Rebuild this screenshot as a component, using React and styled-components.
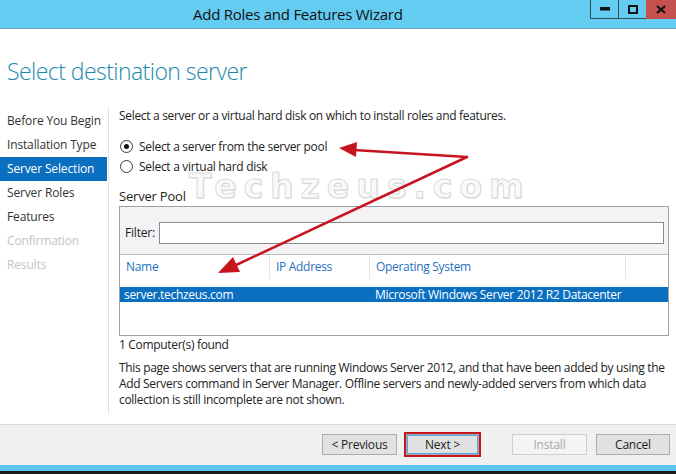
import styled, { createGlobalStyle } from "styled-components";

const GlobalStyle = createGlobalStyle`
    html, body {
        margin: 0;
        padding: 0;
        background: #ffffff;
    }
    body {
        font-family: "Open Sans", "Noto Sans", sans-serif;
        font-size: 12px;
        color: #1e1e1e;
    }
`;

const Window = styled.div`
    position: relative;
    width: 676px;
    height: 474px;
    display: flex;
    flex-direction: column;
    background: #ffffff;
    overflow: hidden;
`;

const TitleBar = styled.div`
    height: 28px;
    display: flex;
    background: #64cbf1;
    border-bottom: 1px solid #6fa9c4;
`;

const Title = styled.div`
    flex: 1;
    padding-left: 193px;
    font-size: 15px;
    line-height: 28px;
    color: #111;
    letter-spacing: -0.25px;
`;

const Controls = styled.div`
    display: flex;
    align-self: flex-start;
    height: 19px;
`;

const ControlButton = styled.div`
    width: ${p => p.w}px;
    height: ${p => (p.close ? 19 : 18)}px;
    display: flex;
    align-items: center;
    justify-content: center;
    background: ${p => (p.close ? "#c75050" : "transparent")};
    border-left: ${p => (p.close ? "none" : "1px solid #2f4f5c")};
    border-bottom: ${p => (p.close ? "none" : "1px solid #2f4f5c")};
`;

const Header = styled.div`
    padding: 27px 0 22px 7px;
`;

const Heading = styled.h1`
    margin: 0;
    font-family: "Open Sans", sans-serif;
    font-weight: 300;
    font-size: 23px;
    line-height: 30px;
    color: #1a8aac;
    letter-spacing: -0.55px;
`;

const Body = styled.div`
    flex: 1;
    display: flex;
    padding-bottom: 10px;
    min-height: 0;
`;

const Nav = styled.div`
    width: 108px;
    padding-top: 1px;
    border-right: 1px solid #e2e2e2;
    display: flex;
    flex-direction: column;
`;

const NavItem = styled.div`
    height: 24px;
    line-height: 24px;
    padding-left: 7px;
    margin-right: 1px;
    white-space: nowrap;
    letter-spacing: -0.15px;
    color: ${p => (p.active ? "#ffffff" : p.disabled ? "#c4c4c4" : "#333333")};
    background: ${p => (p.active ? "#0b6fc0" : "transparent")};
`;

const Content = styled.div`
    flex: 1;
    padding: 0 7px 0 10px;
    display: flex;
    flex-direction: column;
`;

const Text = styled.div`
    line-height: 16px;
    letter-spacing: -0.32px;
    margin-top: ${p => p.mt || 0}px;
    color: #222;
`;

const RadioGroup = styled.div`
    margin-top: 12px;
    display: flex;
    flex-direction: column;
`;

const RadioRow = styled.label`
    height: 20px;
    display: flex;
    align-items: center;
    gap: 6px;
    padding-left: 1px;
    letter-spacing: -0.3px;
    color: #222;
`;

const RadioCircle = styled.span`
    width: 11px;
    height: 11px;
    border-radius: 50%;
    border: 1px solid #3a3a3a;
    background: #fff;
    display: flex;
    align-items: center;
    justify-content: center;
    &::after {
        content: "";
        width: 5px;
        height: 5px;
        border-radius: 50%;
        background: ${p => (p.checked ? "#111" : "transparent")};
    }
`;

const SectionTitle = styled.div`
    margin-top: 11px;
    font-size: 13px;
    line-height: 18px;
    letter-spacing: -0.2px;
    color: #222;
`;

const Pool = styled.div`
    margin-top: 1px;
    height: 128px;
    border: 1px solid #a0a0a0;
    display: flex;
    flex-direction: column;
`;

const FilterBar = styled.div`
    height: 47px;
    background: #f4f2f4;
    display: flex;
    align-items: flex-start;
    padding: 15px 4px 0 5px;
    box-sizing: border-box;
    gap: 4px;
`;

const FilterLabel = styled.span`
    line-height: 21px;
    letter-spacing: -0.2px;
`;

const FilterInput = styled.div`
    flex: 1;
    height: 20px;
    border: 1px solid #8a8a8a;
    background: #fff;
`;

const List = styled.div`
    flex: 1;
    border-top: 1px solid #bdbdbd;
    background: #fff;
    display: flex;
    flex-direction: column;
`;

const HeaderRow = styled.div`
    height: 18px;
    display: grid;
    grid-template-columns: 150px 100px 256px 1fr;
`;

const HeaderCell = styled.div`
    padding-left: 6px;
    line-height: 24px;
    color: #1f70bd;
    letter-spacing: -0.3px;
    border-right: ${p => (p.last ? "none" : "1px solid #e4e4e4")};
    white-space: nowrap;
`;

const DataRow = styled.div`
    margin-top: 14px;
    height: 15px;
    display: grid;
    grid-template-columns: 255px 1fr;
    background: #0b6fc0;
    color: #fff;
    line-height: 15px;
    letter-spacing: -0.3px;
`;

const DataCell = styled.div`
    padding-left: ${p => p.pl}px;
    white-space: nowrap;
`;

const Footer = styled.div`
    height: 41px;
    border-top: 1px solid #dcdcdc;
    background: #f1f0f1;
    display: flex;
    justify-content: flex-end;
    align-items: flex-start;
    padding: 9px 6px 0 0;
    box-sizing: border-box;
`;

const Button = styled.button`
    width: ${p => p.w}px;
    height: 21px;
    margin-left: ${p => p.ml || 0}px;
    padding: 0;
    font-family: "Open Sans", sans-serif;
    font-size: 12px;
    letter-spacing: -0.2px;
    background: ${p => (p.disabled ? "#f4f4f4" : "#e1e1e1")};
    color: ${p => (p.disabled ? "#a8a8a8" : "#222")};
    border: 1px solid ${p => (p.disabled ? "#cfcfcf" : "#acacac")};
    outline: ${p => (p.focused ? "2px solid #c4161c" : "none")};
    box-shadow: ${p => (p.focused ? "inset 0 0 0 1px #4ea6ea" : "none")};
`;

const BottomBand = styled.div`
    height: 6px;
    background: #5cc6ee;
    border-bottom: 3px solid #1c1c1c;
`;

const Overlay = styled.svg`
    position: absolute;
    left: 0;
    top: 0;
    pointer-events: none;
`;

const Watermark = styled.div`
    position: absolute;
    left: 189px;
    top: 167px;
    font-family: "DejaVu Sans", sans-serif;
    font-weight: bold;
    font-size: 33px;
    line-height: 40px;
    letter-spacing: 7px;
    color: rgba(255, 255, 255, 0.7);
    -webkit-text-stroke: 1px rgba(185, 185, 185, 0.55);
    text-shadow: 1px 1px 1px rgba(200, 200, 200, 0.35);
    pointer-events: none;
    white-space: nowrap;
`;

const navItems = [
    { name: "Before You Begin" },
    { name: "Installation Type" },
    { name: "Server Selection", active: true },
    { name: "Server Roles" },
    { name: "Features" },
    { name: "Confirmation", disabled: true },
    { name: "Results", disabled: true },
];

const App = () => {
    return <>
        <GlobalStyle />
        <Window>
            <TitleBar>
                <Title>Add Roles and Features Wizard</Title>
                <Controls>
                    <ControlButton w={27}>
                        <svg width="10" height="4" viewBox="0 0 10 4"><rect x="0" y="0" width="10" height="3.5" fill="#111" /></svg>
                    </ControlButton>
                    <ControlButton w={27}>
                        <svg width="10" height="9" viewBox="0 0 10 9"><rect x="1" y="1" width="8" height="7" fill="none" stroke="#111" strokeWidth="2" /></svg>
                    </ControlButton>
                    <ControlButton w={30} close>
                        <svg width="10" height="9" viewBox="0 0 10 9"><path d="M1 1 L9 8 M9 1 L1 8" stroke="#111" strokeWidth="2.2" /></svg>
                    </ControlButton>
                </Controls>
            </TitleBar>

            <Header>
                <Heading>Select destination server</Heading>
            </Header>

            <Body>
                <Nav>
                    {navItems.map(item => (
                        <NavItem key={item.name} active={item.active} disabled={item.disabled}>{item.name}</NavItem>
                    ))}
                </Nav>
                <Content>
                    <Text>Select a server or a virtual hard disk on which to install roles and features.</Text>
                    <RadioGroup>
                        <RadioRow><RadioCircle checked />Select a server from the server pool</RadioRow>
                        <RadioRow><RadioCircle />Select a virtual hard disk</RadioRow>
                    </RadioGroup>
                    <SectionTitle>Server Pool</SectionTitle>
                    <Pool>
                        <FilterBar>
                            <FilterLabel>Filter:</FilterLabel>
                            <FilterInput />
                        </FilterBar>
                        <List>
                            <HeaderRow>
                                <HeaderCell>Name</HeaderCell>
                                <HeaderCell>IP Address</HeaderCell>
                                <HeaderCell>Operating System</HeaderCell>
                                <HeaderCell last />
                            </HeaderRow>
                            <DataRow>
                                <DataCell pl={4}>server.techzeus.com</DataCell>
                                <DataCell pl={0}>Microsoft Windows Server 2012 R2 Datacenter</DataCell>
                            </DataRow>
                        </List>
                    </Pool>
                    <Text mt={1}>1 Computer(s) found</Text>
                    <Text mt={7}>
                        This page shows servers that are running Windows Server 2012, and that have been added by using the Add Servers command in Server Manager. Offline servers and newly-added servers from which data collection is still incomplete are not shown.
                    </Text>
                </Content>
            </Body>

            <Footer>
                <Button w={75}>&lt; Previous</Button>
                <Button w={73} ml={9} focused>Next &gt;</Button>
                <Button w={75} ml={33} disabled>Install</Button>
                <Button w={74} ml={9}>Cancel</Button>
            </Footer>
            <BottomBand />

            <Watermark>Techzeus.com</Watermark>
            <Overlay width="676" height="474" viewBox="0 0 676 474">
                <g stroke="#c8141e" strokeWidth="2.5" fill="#c8141e" strokeLinecap="round">
                    <line x1="467" y1="157" x2="354" y2="150" />
                    <polygon points="339,148 357,142 356,157" stroke="none" />
                    <line x1="467" y1="157" x2="234" y2="266" />
                    <polygon points="218,273 233,257 240,272" stroke="none" />
                </g>
            </Overlay>
        </Window>
    </>
}

export default App;
